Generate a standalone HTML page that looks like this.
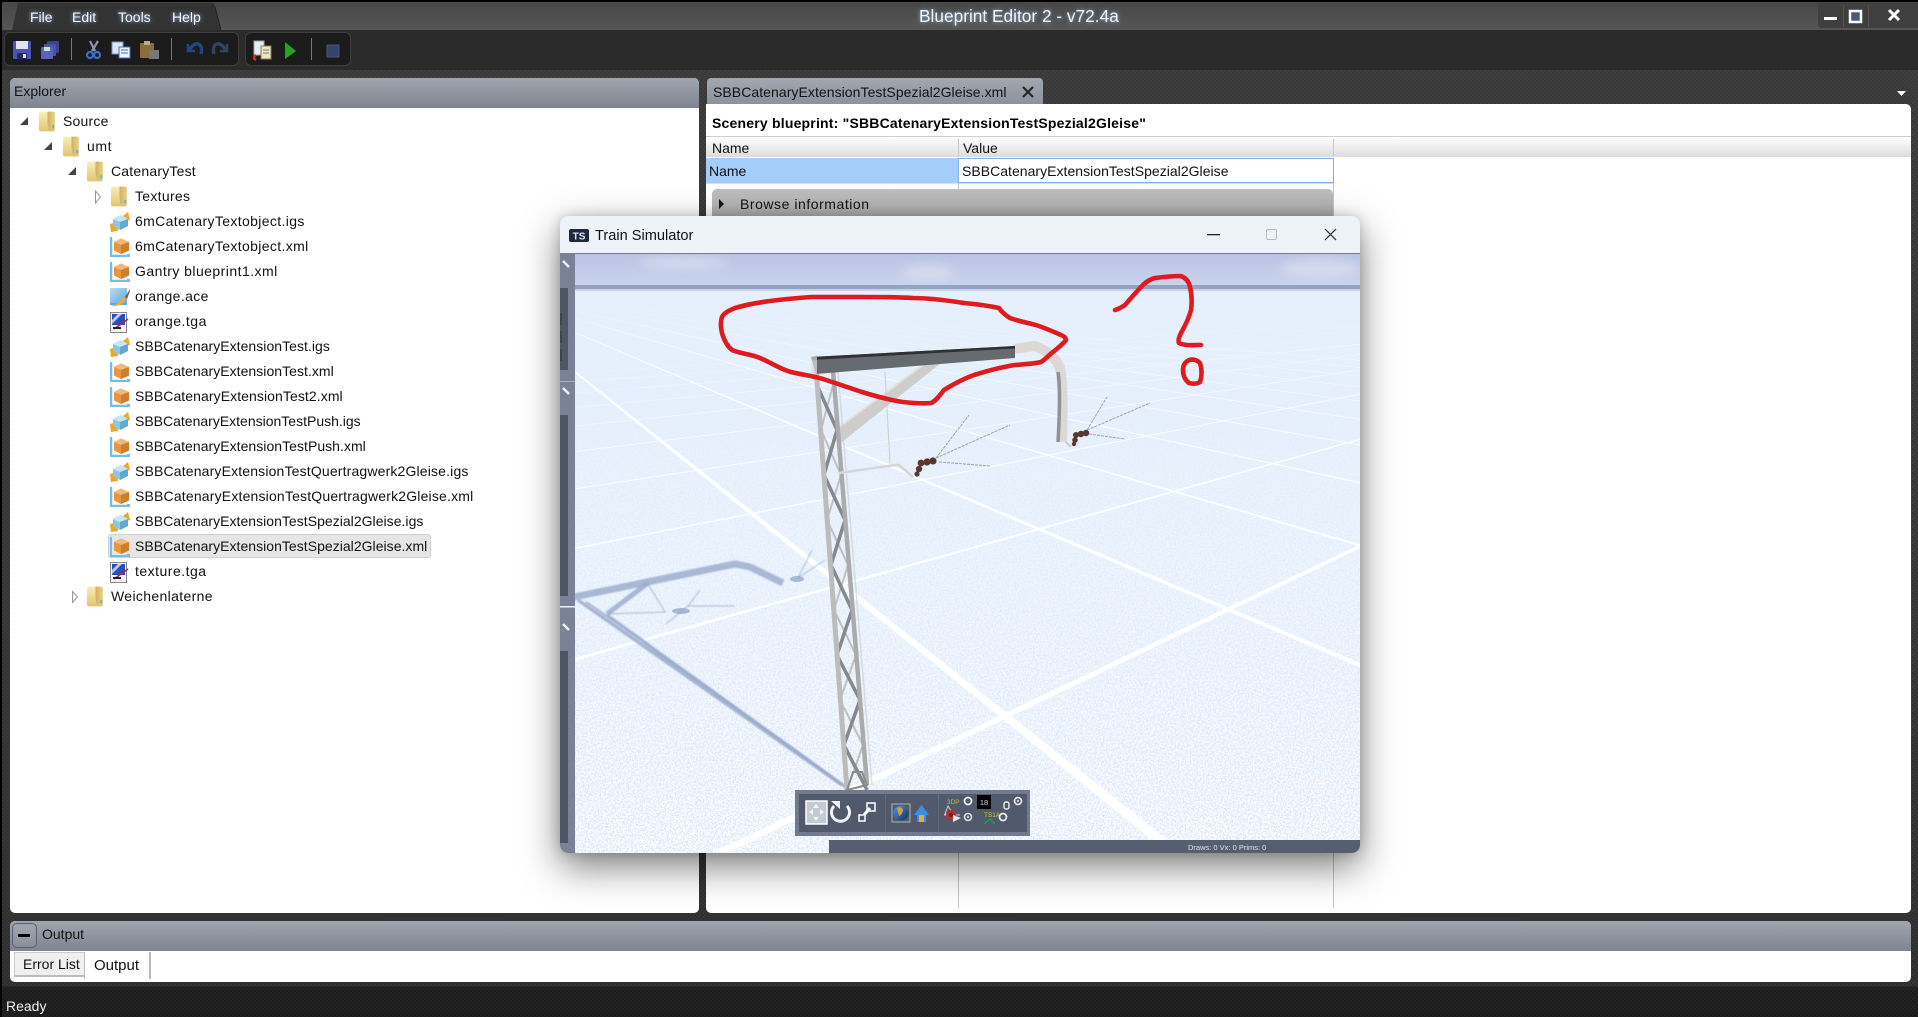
<!DOCTYPE html>
<html><head><meta charset="utf-8"><title>Blueprint Editor 2</title>
<style>
html,body{margin:0;padding:0;width:1918px;height:1017px;overflow:hidden;background:#000}
*{box-sizing:border-box}
body{font-family:"Liberation Sans",sans-serif;font-size:14px;color:#111;position:relative}
.a{position:absolute}
.bg{left:2px;top:2px;width:1916px;height:1015px;background:linear-gradient(#3a3a3a 0,#353535 60%,#2e2e2e 97%,#1d1d1d 97.01%,#1b1b1b 100%)}
.dots{left:2px;top:30px;width:1916px;height:987px;background:repeating-conic-gradient(rgba(255,255,255,.028) 0 25%,transparent 0 50%) 0 0/4px 4px}
.title{left:2px;top:2px;width:1916px;height:28px;background:linear-gradient(#474747,#565656)}
.tb{left:2px;top:30px;width:1916px;height:40px;background:#2b2b2b}
.menu{color:#f4f8ff;font-size:14px;line-height:20px;text-shadow:0 0 4px rgba(170,210,255,.9);top:7px}
.apptitle{left:919px;top:5px;color:#f2f6fb;font-size:17.3px;line-height:22px;text-shadow:0 0 4px rgba(170,210,255,.8);white-space:nowrap}
.group{background:#1b1b1b;border:1px solid #3d3d3d;border-radius:6px;top:32px;height:34px}
.sep{top:38px;width:1px;height:22px;background:#777}
.winbtn{left:1818px;top:3px;width:100px;height:25px;background:#3f3f3f;border-radius:4px 0 0 4px}
.panel{background:#fff}
.hdr{background:linear-gradient(#a0a5ae,#7f8491);border-radius:5px 5px 0 0;color:#111;line-height:26px;font-size:14px;padding-left:4px}
.row{left:0;height:20px;line-height:20px;white-space:nowrap;color:#111}
svg{display:block}
.ic{position:absolute}
</style></head><body>
<div class="a bg"></div>
<div class="a dots"></div>
<div class="a title"></div>
<div class="a tb"></div>

<svg class="a" style="left:0;top:0" width="240" height="31"><path d="M12 30 L18 3 H212 L215 7 L221 30Z" fill="#333"/><path d="M212 3 L215 7 L221 30" fill="none" stroke="#222"/></svg>
<div class="a menu" style="left:30px">File</div>
<div class="a menu" style="left:72px">Edit</div>
<div class="a menu" style="left:118px">Tools</div>
<div class="a menu" style="left:172px">Help</div>
<div class="a apptitle">Blueprint Editor 2 - v72.4a</div>

<div class="a winbtn"></div>
<svg class="a" style="left:1818px;top:3px" width="100" height="25">
<rect x="6" y="14" width="13" height="3" fill="#fff"/>
<rect x="25" y="2" width="1" height="22" fill="#555"/>
<rect x="32" y="8" width="11" height="11" fill="#4a5a74" stroke="#fff" stroke-width="2.5"/>
<rect x="50" y="2" width="1" height="22" fill="#555"/>
<path d="M71 7 L81 17 M81 7 L71 17" stroke="#fff" stroke-width="3"/>
</svg>

<!-- toolbar -->
<div class="a group" style="left:4px;width:235px"></div>
<div class="a group" style="left:245px;width:106px"></div>
<div class="a sep" style="left:71px"></div>
<div class="a sep" style="left:171px"></div>
<div class="a sep" style="left:311px"></div>
<svg class="a" style="left:0;top:30px" width="360" height="40">
<g>
<rect x="13" y="11" width="18" height="18" rx="1" fill="#4b54b5"/><rect x="16" y="11" width="12" height="8" fill="#dfe3f4"/><rect x="17" y="23" width="10" height="6" fill="#232a5e"/><rect x="23" y="24" width="3" height="4" fill="#dde"/>
<rect x="47" y="11" width="12" height="12" rx="1" fill="#3d4488"/><rect x="44" y="14" width="12" height="12" rx="1" fill="#4b54a5"/><rect x="41" y="17" width="12" height="12" rx="1" fill="#5a64b8"/><rect x="44" y="17" width="6" height="4" fill="#cdd"/>
<path d="M90 11 L95 21 M98 11 L92 21" stroke="#8a96b0" stroke-width="2.2"/><circle cx="90" cy="25" r="3" fill="none" stroke="#3f6fc0" stroke-width="2.2"/><circle cx="97" cy="25" r="3" fill="none" stroke="#3f6fc0" stroke-width="2.2"/>
<rect x="112" y="12" width="11" height="12" fill="#dbe5f5" stroke="#7c93c0"/><rect x="119" y="17" width="11" height="11" fill="#eef2fb" stroke="#3f6fc0"/><path d="M121 20h7M121 23h7" stroke="#3f6fc0"/>
<rect x="140" y="13" width="14" height="15" rx="1" fill="#8a6d3c"/><rect x="144" y="11" width="6" height="4" fill="#b8ad90"/><rect x="149" y="20" width="10" height="9" fill="#777"/>
<path d="M188 14 v7 h7" fill="none" stroke="#24457e" stroke-width="2.5"/><path d="M189 21 C194 10 204 12 201 24" fill="none" stroke="#24457e" stroke-width="3.4"/>
<path d="M227 14 v7 h-7" fill="none" stroke="#33425f" stroke-width="2.5"/><path d="M226 21 C221 10 211 12 214 24" fill="none" stroke="#33425f" stroke-width="3.4"/>
<rect x="254" y="11" width="10" height="14" fill="#e8ecf5" stroke="#9aa"/><rect x="261" y="16" width="10" height="13" fill="#efe5c4" stroke="#8a7a50"/><path d="M256 25 q-4 3 0 5" stroke="#d22" stroke-width="2.5" fill="none"/><path d="M263 20h6M263 23h6" stroke="#877"/>
<path d="M285 12 L296 21 L285 29Z" fill="#21a51e"/>
<rect x="327" y="15" width="12" height="12" fill="#34446c" stroke="#4a5675"/>
</g></svg>

<svg width="0" height="0" style="position:absolute"><defs>
<linearGradient id="fg" x1="0" x2="0" y1="0" y2="1"><stop offset="0" stop-color="#f7eeb8"/><stop offset="1" stop-color="#e2c56c"/></linearGradient>
<linearGradient id="fd" x1="0" x2="1" y1="0" y2="0"><stop offset="0" stop-color="#cfb060"/><stop offset="1" stop-color="#e9d68e"/></linearGradient>
<linearGradient id="bl" x1="0" x2="1" y1="0" y2="1"><stop offset="0" stop-color="#bcdcf2"/><stop offset="1" stop-color="#5fa8de"/></linearGradient>
<symbol id="folder" viewBox="0 0 18 21"><rect x="0" y="0" width="17" height="21" rx="2" fill="url(#fg)"/><path d="M9 0 h6 q2 0 2 2 v17 q0 2 -2 2 h-3 q-3 -4 -3 -10z" fill="url(#fd)"/><rect x="14" y="14" width="2" height="4" fill="#6bb3d8"/></symbol>
<symbol id="xml" viewBox="0 0 20 21"><path d="M0 0 h2 v17 h18 v3 H0z" fill="#73bdea"/><path d="M2 2 h1 v15 h14 v1 H2z" fill="#d7ecf8"/><path d="M11 1.5 L19 5 L19 13.5 L11 17 L4 13.5 L4 5Z" fill="#e6963f"/><path d="M11 1.5 L19 5 L11 8 L4 5Z" fill="#f2b878"/><path d="M11 8 L19 5 L19 13.5 L11 17Z" fill="#cf7f2a"/></symbol>
<symbol id="igs" viewBox="0 0 20 21"><path d="M0 12 L7 10 L8 19 L1 20 Z" fill="#eaa92a"/><path d="M13 4 L18 0 L20 8 L16 9Z" fill="#eaa92a"/><path d="M11 3 L18 7 L18 14 L10 18 L3 14 L3 7Z" fill="#8cc6e4"/><path d="M11 3 L18 7 L10 10 L3 7Z" fill="#c7e6f5"/><path d="M10 10 L18 7 L18 14 L10 18Z" fill="#62a9cf"/></symbol>
<symbol id="ace" viewBox="0 0 20 21"><path d="M0 1 h17 v15 h-17z" fill="url(#bl)"/><path d="M0 16 H17 V18 H0z" fill="#5fa8de"/><path d="M1 19 Q9 17 13 10 L16 12 Q12 20 1 19Z" fill="#eea93a"/><path d="M15 10 L20 2 L20 4 L17 12Z" fill="#8a5a30"/></symbol>
<symbol id="tga" viewBox="0 0 20 21"><rect x="0.5" y="0.5" width="16" height="20" fill="#f2f4f8" stroke="#888"/><path d="M2 2 H15 V13 H2Z" fill="#2750b8"/><path d="M2 8 L8 2 L12 2 L2 12Z" fill="#b9ccf0"/><path d="M4 17 L18 7" stroke="#b02a3a" stroke-width="1.6"/><path d="M3 15h8v2H3z" fill="#222"/></symbol>
</defs></svg>

<!-- Explorer -->
<div class="a panel" style="left:10px;top:78px;width:689px;height:835px;border-radius:5px 5px 5px 5px"></div>
<div class="a hdr" style="left:10px;top:78px;width:689px;height:30px">Explorer</div>

<div class="a" style="left:0;top:0;width:700px;height:700px" id="tree">
<svg class="a" style="left:0;top:100px" width="110" height="110">
<path d="M28 17 V25 H20Z" fill="#444"/>
<path d="M52 42 V50 H44Z" fill="#444"/>
<path d="M76 67 V75 H68Z" fill="#444"/>
<path d="M95.5 91 L100.5 97 L95.5 103Z" fill="#fff" stroke="#999"/>
</svg>
<svg class="ic" style="left:39px;top:111px" width="17" height="21"><use href="#folder"/></svg><div class="a row" style="left:63px;top:111px;letter-spacing:.2px">Source</div>
<svg class="ic" style="left:63px;top:136px" width="17" height="21"><use href="#folder"/></svg><div class="a row" style="left:87px;top:136px;letter-spacing:.6px">umt</div>
<svg class="ic" style="left:87px;top:161px" width="17" height="21"><use href="#folder"/></svg><div class="a row" style="left:111px;top:161px;letter-spacing:.2px">CatenaryTest</div>
<svg class="ic" style="left:111px;top:186px" width="17" height="21"><use href="#folder"/></svg><div class="a row" style="left:135px;top:186px;letter-spacing:.3px">Textures</div>

<svg class="ic" style="left:110px;top:212px" width="20" height="21"><use href="#igs"/></svg><div class="a row" style="left:135px;top:211px;letter-spacing:.36px">6mCatenaryTextobject.igs</div>
<svg class="ic" style="left:110px;top:237px" width="20" height="21"><use href="#xml"/></svg><div class="a row" style="left:135px;top:236px;letter-spacing:.36px">6mCatenaryTextobject.xml</div>
<svg class="ic" style="left:110px;top:262px" width="20" height="21"><use href="#xml"/></svg><div class="a row" style="left:135px;top:261px;letter-spacing:.46px">Gantry blueprint1.xml</div>
<svg class="ic" style="left:110px;top:287px" width="20" height="21"><use href="#ace"/></svg><div class="a row" style="left:135px;top:286px;letter-spacing:.37px">orange.ace</div>
<svg class="ic" style="left:110px;top:312px" width="20" height="21"><use href="#tga"/></svg><div class="a row" style="left:135px;top:311px;letter-spacing:.49px">orange.tga</div>
<svg class="ic" style="left:110px;top:337px" width="20" height="21"><use href="#igs"/></svg><div class="a row" style="left:135px;top:336px;letter-spacing:.04px">SBBCatenaryExtensionTest.igs</div>
<svg class="ic" style="left:110px;top:362px" width="20" height="21"><use href="#xml"/></svg><div class="a row" style="left:135px;top:361px;letter-spacing:.04px">SBBCatenaryExtensionTest.xml</div>
<svg class="ic" style="left:110px;top:387px" width="20" height="21"><use href="#xml"/></svg><div class="a row" style="left:135px;top:386px;letter-spacing:.08px">SBBCatenaryExtensionTest2.xml</div>
<svg class="ic" style="left:110px;top:412px" width="20" height="21"><use href="#igs"/></svg><div class="a row" style="left:135px;top:411px">SBBCatenaryExtensionTestPush.igs</div>
<svg class="ic" style="left:110px;top:437px" width="20" height="21"><use href="#xml"/></svg><div class="a row" style="left:135px;top:436px;letter-spacing:.04px">SBBCatenaryExtensionTestPush.xml</div>
<svg class="ic" style="left:110px;top:462px" width="20" height="21"><use href="#igs"/></svg><div class="a row" style="left:135px;top:461px;letter-spacing:.16px">SBBCatenaryExtensionTestQuertragwerk2Gleise.igs</div>
<svg class="ic" style="left:110px;top:487px" width="20" height="21"><use href="#xml"/></svg><div class="a row" style="left:135px;top:486px;letter-spacing:.18px">SBBCatenaryExtensionTestQuertragwerk2Gleise.xml</div>
<svg class="ic" style="left:110px;top:512px" width="20" height="21"><use href="#igs"/></svg><div class="a row" style="left:135px;top:511px;letter-spacing:.03px">SBBCatenaryExtensionTestSpezial2Gleise.igs</div>
<div class="a" style="left:108px;top:534px;width:323px;height:24px;background:#e6e6e6;border:1px solid #d0d0d0;border-radius:3px"></div>
<svg class="ic" style="left:110px;top:537px" width="20" height="21"><use href="#xml"/></svg><div class="a row" style="left:135px;top:536px;letter-spacing:.03px">SBBCatenaryExtensionTestSpezial2Gleise.xml</div>
<svg class="ic" style="left:110px;top:562px" width="20" height="21"><use href="#tga"/></svg><div class="a row" style="left:135px;top:561px;letter-spacing:.49px">texture.tga</div>
<svg class="a" style="left:70px;top:590px" width="12" height="14"><path d="M2.5 1.5 L7.5 7 L2.5 12.5Z" fill="#fff" stroke="#999"/></svg>
<svg class="ic" style="left:87px;top:586px" width="17" height="21"><use href="#folder"/></svg><div class="a row" style="left:111px;top:586px;letter-spacing:.35px">Weichenlaterne</div>
</div>

<!-- Document -->
<div class="a" style="left:707px;top:78px;width:336px;height:28px;background:linear-gradient(#a2a7b0,#8b909c);border-radius:4px 4px 0 0"></div>
<div class="a" style="left:713px;top:82px;height:20px;line-height:20px;white-space:nowrap;color:#111;letter-spacing:.06px">SBBCatenaryExtensionTestSpezial2Gleise.xml</div>
<svg class="a" style="left:1020px;top:84px" width="16" height="16"><path d="M3 3 L13 13 M13 3 L3 13" stroke="#222" stroke-width="2"/></svg>
<svg class="a" style="left:1897px;top:91px" width="10" height="6"><path d="M0 0 H9 L4.5 5Z" fill="#fff"/></svg>

<div class="a panel" style="left:706px;top:104px;width:1205px;height:809px;border-radius:0 5px 5px 5px"></div>
<div class="a" style="left:712px;top:113px;height:20px;line-height:20px;font-weight:bold;white-space:nowrap;color:#000;letter-spacing:.2px">Scenery blueprint: "SBBCatenaryExtensionTestSpezial2Gleise"</div>
<div class="a" style="left:706px;top:136px;width:1205px;height:1px;background:#cfcfcf"></div>
<div class="a" style="left:706px;top:138px;width:1205px;height:19px;background:linear-gradient(#fdfdfd,#dcdcdc)"></div>
<div class="a" style="left:958px;top:139px;width:1px;height:18px;background:#c8c8c8"></div>
<div class="a" style="left:1333px;top:139px;width:1px;height:18px;background:#c8c8c8"></div>
<div class="a" style="left:712px;top:138px;line-height:20px">Name</div>
<div class="a" style="left:963px;top:138px;line-height:20px">Value</div>
<div class="a" style="left:706px;top:158px;width:252px;height:25px;background:#a3cdfb;line-height:26px;padding-left:3px">Name</div>
<div class="a" style="left:958px;top:158px;width:376px;height:25px;background:#fff;border:1px solid #7db1ec;line-height:24px;padding-left:3px;white-space:nowrap;letter-spacing:.03px">SBBCatenaryExtensionTestSpezial2Gleise</div>
<div class="a" style="left:706px;top:183px;width:628px;height:1px;background:#ddd"></div>
<div class="a" style="left:958px;top:183px;width:1px;height:725px;background:#c4c4c4"></div>
<div class="a" style="left:1333px;top:183px;width:1px;height:725px;background:#c4c4c4"></div>
<div class="a" style="left:712px;top:189px;width:621px;height:32px;background:linear-gradient(#bfbfbf,#a9a9a9);border-radius:5px"></div>
<svg class="a" style="left:718px;top:198px" width="8" height="12"><path d="M1 1 L6 6 L1 11Z" fill="#111"/></svg>
<div class="a" style="left:740px;top:194px;line-height:20px;white-space:nowrap;color:#111;letter-spacing:.54px">Browse information</div>

<!-- Output -->
<div class="a panel" style="left:10px;top:921px;width:1901px;height:61px;border-radius:5px"></div>
<div class="a hdr" style="left:10px;top:921px;width:1901px;height:30px;padding-left:32px">Output</div>
<div class="a" style="left:12px;top:923px;width:25px;height:25px;border:1px solid #5a5f6b;border-radius:5px;background:rgba(255,255,255,.05)"></div>
<div class="a" style="left:18px;top:934px;width:12px;height:3px;background:#000"></div>
<div class="a" style="left:14px;top:952px;width:71px;height:25px;background:#f0f0f0;border:1px solid #ccc;border-bottom:2px solid #bbb;line-height:23px;padding-left:8px;color:#111">Error List</div>
<div class="a" style="left:84px;top:952px;width:1px;height:27px;background:#bbb"></div>
<div class="a" style="left:94px;top:956px;line-height:20px;color:#111;font-size:15px">Output</div>
<div class="a" style="left:149px;top:952px;width:2px;height:27px;background:#bbb"></div>
<div class="a" style="left:6px;top:996px;line-height:20px;color:#f2f2f2;font-size:14px">Ready</div>

<!-- Train Simulator window -->
<div class="a" style="left:560px;top:216px;width:800px;height:637px;border-radius:8px;box-shadow:0 14px 38px rgba(0,0,0,.5),0 0 12px rgba(0,0,0,.18);background:#eef3fa;overflow:hidden">
 <div class="a" style="left:0;top:37px;width:800px;height:1px;background:#747c90"></div>
 <svg class="a" style="left:9px;top:13px" width="20" height="14"><rect width="20" height="13" rx="2" fill="#1e2a3c"/><text x="10" y="10.5" font-family="Liberation Sans" font-weight="bold" font-size="10" fill="#dfe8f4" text-anchor="middle">TS</text></svg>
 <div class="a" style="left:35px;top:10px;font-size:14.6px;line-height:20px;color:#111;white-space:nowrap">Train Simulator</div>
 <svg class="a" style="left:645px;top:8px" width="150" height="24">
  <rect x="2" y="10" width="13" height="1.3" fill="#222"/>
  <rect x="61.5" y="5.5" width="10" height="10" rx="1.5" fill="none" stroke="#bbb"/>
  <path d="M120 5 L131 16 M131 5 L120 16" stroke="#222" stroke-width="1.2"/>
 </svg>
 <svg class="a" style="left:0;top:38px" width="800" height="599" viewBox="560 254 800 599">
  <defs>
   <linearGradient id="sky" x1="0" x2="0" y1="0" y2="1"><stop offset="0" stop-color="#b9c3e3"/><stop offset="1" stop-color="#ccd4ed"/></linearGradient>
   <linearGradient id="gr" x1="0" x2="0" y1="0" y2="1"><stop offset="0" stop-color="#e6f0fd"/><stop offset=".5" stop-color="#e3eefc"/><stop offset="1" stop-color="#dde8f8"/></linearGradient>
   <linearGradient id="haze" x1="0" x2="0" y1="0" y2="1"><stop offset="0" stop-color="#e6f0fd" stop-opacity=".9"/><stop offset="1" stop-color="#e6f0fd" stop-opacity="0"/></linearGradient>
   <linearGradient id="nm" x1="0" x2="0" y1="0" y2="1"><stop offset="0" stop-color="#000"/><stop offset=".2" stop-color="#444"/><stop offset="1" stop-color="#fff"/></linearGradient>
   <linearGradient id="glb" x1="0" x2="1" y1="0" y2="1"><stop offset="0" stop-color="#5f9de0"/><stop offset="1" stop-color="#0c2a5e"/></linearGradient>
   <mask id="nmask"><rect x="560" y="380" width="800" height="473" fill="url(#nm)"/></mask>
   <filter id="noise" x="0" y="0" width="100%" height="100%"><feTurbulence type="fractalNoise" baseFrequency="0.6" numOctaves="3" seed="3"/><feColorMatrix type="matrix" values="0 0 0 0 1  0 0 0 0 1  0 0 0 0 1  3.4 0 0 0 -1.15"/></filter>
   <filter id="b4"><feGaussianBlur stdDeviation="5"/></filter>
   <filter id="b1"><feGaussianBlur stdDeviation=".8"/></filter>
  </defs>
  <rect x="560" y="254" width="800" height="34" fill="url(#sky)"/>
  <g filter="url(#b4)" fill="#dfe4f3" opacity=".65"><ellipse cx="683" cy="263" rx="45" ry="6"/><ellipse cx="928" cy="273" rx="26" ry="8"/><ellipse cx="1320" cy="268" rx="40" ry="9"/></g>
  <rect x="560" y="288" width="800" height="565" fill="url(#gr)"/>
  <g fill="#fff">
   <polygon points="470,288 1167,852 1183,852"/><polygon points="470,288 1793,852 1809,852"/><polygon points="470,288 2413,852 2429,852"/><polygon points="470,288 3039,852 3055,852"/><polygon points="470,288 3660,852 3676,852"/><polygon points="470,288 4286,852 4302,852"/><polygon points="470,288 4906,852 4922,852"/><polygon points="470,288 5532,852 5548,852"/><polygon points="470,288 6158,852 6174,852"/><polygon points="470,288 6779,852 6795,852"/><polygon points="470,288 7399,852 7415,852"/>
   <polygon points="1900,288 713,852 729,852"/><polygon points="1900,288 -121,852 -105,852"/><polygon points="1900,288 -979,852 -963,852"/><polygon points="1900,288 -1830,852 -1814,852"/><polygon points="1900,288 -2676,852 -2660,852"/><polygon points="1900,288 -3522,852 -3506,852"/><polygon points="1900,288 -4368,852 -4352,852"/><polygon points="1900,288 -5214,852 -5198,852"/><polygon points="1900,288 -6060,852 -6044,852"/><polygon points="1900,288 -6906,852 -6890,852"/>
  </g>
  <rect x="560" y="289" width="800" height="40" fill="url(#haze)"/>
  <rect x="560" y="380" width="800" height="473" filter="url(#noise)" mask="url(#nmask)"/>
  <rect x="560" y="285" width="800" height="4" fill="#94a2c6"/>
  <rect x="560" y="289" width="800" height="2" fill="#c5d2e8"/>

  <!-- shadow -->
  <g fill="none" stroke="#98a9ca" stroke-opacity=".8" filter="url(#b1)">
   <path d="M574 597 L735 564 L750 567 L783 583" stroke-width="7"/>
   <path d="M648 583 L607 614" stroke-width="5"/>
   <polygon points="576,600 607,617 850,790 842,785" fill="#98a9ca" fill-opacity=".25" stroke="none"/>
   <path d="M578 600 L842 785" stroke-width="3.5"/><path d="M607 615 L850 790" stroke-width="3"/>
   <path d="M586 602 L641 639 L658 653 L709 688 L729 703 L777 737 L801 754 L850 790" stroke-width="2"/>
   <path d="M607 614 L665 612 L648 584" stroke-width="1"/>
   <path d="M666 624 L688 606 L700 590 M688 606 L735 606 M798 578 L812 550 M798 578 L825 560" stroke-width="1"/>
  </g>
  <ellipse cx="681" cy="611" rx="9" ry="3" fill="#8fa0c2" opacity=".7"/>
  <ellipse cx="797" cy="579" rx="7" ry="3" fill="#8fa0c2" opacity=".7"/>

  <!-- brace and extension -->
  <polygon points="923,365 941,363 837,446 835,430" fill="#cfcdcc"/>
  <path d="M923 365 L835 430" stroke="#e4e2e1" stroke-width="2"/>
  <path d="M1014 349 L1034 346 Q1053 352 1060 368 Q1064 385 1062 442" fill="none" stroke="#dcd8d6" stroke-width="10"/>
  <path d="M1058 372 Q1061 390 1058 442" fill="none" stroke="#8f9299" stroke-width="3.5"/>

  <!-- mast -->
  <g fill="none">
   <path d="M833 385 L821 430 L841 475 L827 520 L848 565 L834 610 L856 655 L840 700 L863 745 L847 790" stroke="#c0c0c0" stroke-width="2"/>
   <path d="M817 385 L837 430 L824 475 L845 520 L831 565 L852 610 L837 655 L860 700 L844 745 L867 790" stroke="#85888d" stroke-width="3.5"/>
   <path d="M816 367 L847 790" stroke="#bcbcbc" stroke-width="5"/>
   <path d="M833 370 L867 785" stroke="#ababab" stroke-width="4.5"/>
   <path d="M838 372 L872 785" stroke="#c7cbd2" stroke-width="1.5" opacity=".6"/>
  </g>
  <polygon points="847,790 867,785 862,772 853,772" fill="none" stroke="#8b8b8b" stroke-width="2"/>

  <!-- beam -->
  <polygon points="811,357 1015,346 1015,358 816,374" fill="#666b71"/>
  <polygon points="811,357 1015,346 1015,348.5 812,360" fill="#2f3135"/>
  <rect x="811" y="357" width="6" height="17" fill="#dedede" opacity=".7"/>

  <!-- wires and arms -->
  <path d="M885 372 L890 463" stroke="#cfcccb" stroke-width="1"/>
  <path d="M839 473 L895 465 L899 465 L913 477" fill="none" stroke="#d8d6d4" stroke-width="2.5"/>
  <path d="M936 458 L969 415 M936 458 L1010 425 M939 462 L990 466" stroke="#a3a3a3" stroke-width="1" stroke-dasharray="3 1" fill="none"/>
  <path d="M1087 430 L1107 397 M1087 430 L1150 403 M1089 434 L1125 439" stroke="#a3a3a3" stroke-width="1" stroke-dasharray="3 1" fill="none"/>
  <path d="M1066 442 L1071 447" stroke="#ccc" stroke-width="2"/>
  <g fill="#5a372e"><circle cx="933" cy="461" r="3.6"/><circle cx="927" cy="462" r="3.6"/><circle cx="921" cy="463" r="3.4"/><circle cx="919" cy="469" r="3.2"/><circle cx="917" cy="474" r="2.6"/>
  <circle cx="1086" cy="433" r="3.2"/><circle cx="1081" cy="434" r="3.2"/><circle cx="1076" cy="435" r="3"/><circle cx="1075" cy="440" r="2.8"/><circle cx="1074" cy="444" r="2.2"/></g>

  <!-- left strip -->
  <rect x="560" y="254" width="15" height="599" fill="#7b8297"/>
  <rect x="560" y="288" width="8" height="82" fill="#4c5664"/>
  <rect x="560" y="415" width="8" height="181" fill="#4c5664"/>
  <rect x="560" y="651" width="8" height="192" fill="#4c5664"/>
  <rect x="560" y="381" width="15" height="1" fill="#aab0c0"/>
  <rect x="560" y="606" width="15" height="1.5" fill="#f0f2f6"/>
  <g stroke="#f0f0f0" stroke-width="2.5"><path d="M563 261 L569 267"/><path d="M563 388 L569 394"/><path d="M563 624 L569 630"/></g>
  <g fill="#444"><rect x="560" y="313" width="2" height="12"/><rect x="560" y="331" width="2" height="12"/><rect x="560" y="349" width="2" height="12"/></g>

  <!-- bottom bar -->
  <rect x="829" y="840" width="531" height="13" fill="#555f70"/>
  <text x="1188" y="850" font-family="Liberation Sans" font-size="7.5" fill="#dfe3ea">Draws: 0 Vx: 0 Prims: 0</text>

  <!-- overlay toolbar -->
  <rect x="795" y="790" width="235" height="46" fill="#727a8e"/>
  <rect x="799" y="794" width="228" height="38" fill="#505a6c"/>
  <rect x="885" y="794" width="1" height="38" fill="#626b7d"/><rect x="938" y="794" width="1" height="38" fill="#626b7d"/>
  <rect x="806" y="801" width="21" height="23" fill="#c4cad4" stroke="#fff" stroke-width="1.5"/>
  <path d="M816 804 l3 4 h-6z M816 821 l3 -4 h-6z M809 812 l4 3 v-6z M824 812 l-4 3 v-6z" fill="#f2f4f8"/>
  <path d="M834 806 A9 9 0 1 0 847 806" fill="none" stroke="#f2f4f6" stroke-width="3"/><path d="M831 801 h9 v8z" fill="#f2f4f6"/>
  <rect x="867" y="803" width="8" height="8" fill="none" stroke="#fff" stroke-width="1.5"/><rect x="859" y="815" width="6" height="6" fill="none" stroke="#fff" stroke-width="1.5"/><path d="M864 815 L870 808" stroke="#fff" stroke-width="3"/>
  <rect x="892" y="804" width="18" height="18" fill="none" stroke="#aeb4c0"/><circle cx="901" cy="813" r="7.5" fill="url(#glb)"/><path d="M897 808 q5 -2 6 2 q-1 5 -4 6z" fill="#c9a24a"/>
  <path d="M914 815 L921.5 805 L929 815 H926 V822 H917 V815Z" fill="#3b8fe0"/><rect x="919" y="815" width="5" height="7" fill="#e8a93c"/>
  <text x="947" y="804" font-family="Liberation Sans" font-size="6.5" fill="#c9b840">3DP</text><path d="M948 806 L953 814 H945Z M944 815 h16" fill="none" stroke="#ccc"/>
  <circle cx="968" cy="801" r="3.5" fill="none" stroke="#eee" stroke-width="1.8"/>
  <rect x="977" y="795" width="14" height="14" fill="#000"/><text x="984" y="805" font-family="Liberation Sans" font-size="7.5" fill="#ddd" text-anchor="middle">18</text>
  <rect x="1004" y="802" width="5" height="7" rx="2" fill="none" stroke="#eee" stroke-width="1.4"/>
  <circle cx="1018" cy="801" r="3.5" fill="#505a6c" stroke="#eee" stroke-width="1.6"/><circle cx="1018" cy="801" r="1.2" fill="#ccc"/>
  <circle cx="951" cy="815" r="5" fill="#c8242c"/><path d="M953 815 L961 818 L953 822Z" fill="#e8eaf0"/><circle cx="951" cy="815" r="2" fill="#3a3a3a"/>
  <circle cx="968" cy="817" r="3.5" fill="#505a6c" stroke="#ddd" stroke-width="1.6"/><circle cx="968" cy="817" r="1.2" fill="#ccc"/>
  <text x="984" y="817" font-family="Liberation Sans" font-size="6.5" fill="#d8c830">TS1A</text><path d="M984 824 L990 819 L995 824" fill="none" stroke="#2a9a4a" stroke-width="1.4"/>
  <circle cx="1003" cy="817" r="3.5" fill="none" stroke="#eee" stroke-width="1.8"/>

  <!-- red scribble -->
  <g fill="none" stroke="#e01b1f" stroke-width="4.6" stroke-linecap="round" stroke-linejoin="round">
   <path d="M999 308 C985 305 975 304 964 303 C945 300 930 298 913 298 C895 297 880 297 862 297 C845 297 830 297 811 297 C798 298 785 299 770 301 C755 303 745 305 735 308 C728 311 724 313 722 317 C720 323 721 328 722 333 C724 340 727 346 732 350 C741 354 751 354 760 358 C770 362 780 369 791 372 C803 375 815 376 826 380 C838 384 850 388 862 392 C875 396 889 400 903 402 C912 403 922 404 931 403 C936 401 940 395 944 390 C952 385 963 379 974 375 C987 371 1001 367 1015 365 C1025 364 1033 364 1041 362 C1046 359 1049 355 1053 352 C1058 348 1063 344 1066 340 C1066 338 1064 336 1061 335 C1052 331 1045 328 1036 325 C1028 323 1018 321 1010 318 C1005 315 1001 311 999 308"/>
   <path d="M1115 310 C1119 309 1122 307 1125 305 C1131 298 1137 291 1143 285 C1147 281 1151 279 1155 278 C1163 277 1172 276 1181 276 C1186 278 1189 282 1190 287 C1192 295 1192 303 1191 310 C1189 318 1185 326 1181 333 C1179 337 1178 341 1179 343 C1185 346 1193 345 1201 345"/>
   <path d="M1189 360 C1185 362 1183 365 1183 370 C1183 375 1185 380 1189 383 C1193 384 1197 384 1200 382 C1202 376 1202 369 1200 363 C1197 360 1193 359 1189 360Z"/>
  </g>
 </svg>
</div>
</body></html>
